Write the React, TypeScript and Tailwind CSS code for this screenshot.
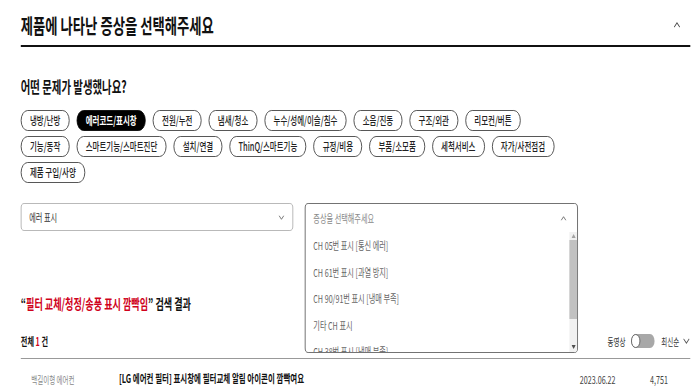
import React from "react";

const row1 = ["냉방/난방", "에러코드/표시창", "전원/누전", "냄새/청소", "누수/성에/이슬/침수", "소음/진동", "구조/외관", "리모컨/버튼"];
const row2 = ["기능/동작", "스마트기능/스마트진단", "설치/연결", "ThinQ/스마트기능", "규정/비용", "부품/소모품", "세척서비스", "자가/사전점검"];
const row3 = ["제품 구입/사양"];
const options = [
  "CH 05번 표시 [통신 에러]",
  "CH 61번 표시 [과열 방지]",
  "CH 90/91번 표시 [냉매 부족]",
  "기타 CH 표시",
  "CH 38번 표시 [냉매 부족]",
];

function Chevron({ up, className }: { up?: boolean; className?: string }) {
  return (
    <svg viewBox="0 0 12 7" className={className} fill="none" stroke="currentColor" strokeWidth="1.3">
      <path d={up ? "M1 6L6 1L11 6" : "M1 1L6 6L11 1"} />
    </svg>
  );
}

function Pill({ label, active }: { label: string; active?: boolean }) {
  return (
    <div
      className={
        active
          ? "h-[21px] px-[13px] rounded-full border-y border-x-[1.5px] border-black bg-black text-white text-[11.5px] font-bold flex items-center whitespace-nowrap"
          : "h-[21px] px-[13px] rounded-full border-y border-x-[1.5px] border-[#333] bg-white text-[#222] text-[11.5px] font-medium flex items-center whitespace-nowrap"
      }
    >
      {label}
    </div>
  );
}

function PillRow({ items }: { items: string[] }) {
  return (
    <div className="flex gap-[11px]">
      {items.map((l) => (
        <Pill key={l} label={l} active={l === "에러코드/표시창"} />
      ))}
    </div>
  );
}

export default function App() {
  return (
    <div className="w-[700px] h-[392px] overflow-hidden bg-white">
      <div className="w-[1077px] origin-top-left scale-x-[0.65] pl-[32px] pr-[15px] font-['Noto_Sans_CJK_KR','Noto_Sans',sans-serif] text-[#111]">
        {/* header */}
        <div className="flex items-center justify-between h-[47px] pt-[5px] border-b-2 border-[#111]">
          <h2 className="text-[20.5px] font-bold leading-[28px] text-[#111]">제품에 나타난 증상을 선택해주세요</h2>
          <Chevron up className="w-[11px] h-[6px] mr-[15px] text-[#444]" />
        </div>

        <h3 className="mt-[28px] text-[16px] font-bold leading-[22px]">어떤 문제가 발생했나요?</h3>

        <div className="mt-[13px] flex flex-col gap-[5px]">
          <PillRow items={row1} />
          <PillRow items={row2} />
          <PillRow items={row3} />
        </div>

        {/* selects */}
        <div className="mt-[20px] flex gap-[18px]">
          <div className="w-[419px] h-[28px] border-y border-x-[1.5px] border-[#aaa] rounded-[5px] flex items-center justify-between pl-[12px] pr-[12px] text-[11px] text-[#333]">
            <span>에러 표시</span>
            <Chevron className="w-[10px] h-[5px] text-[#555]" />
          </div>
          <div className="relative w-[420px] h-[28px]">
            <div className="absolute left-0 right-0 top-0 h-[150px] z-10 border-y border-x-[1.5px] border-[#555] rounded-[5px] bg-white flex flex-col overflow-hidden">
              <div className="h-[28px] shrink-0 flex items-center justify-between pl-[12px] pr-[16px] text-[11px] text-[#888]">
                <span>증상을 선택해주세요</span>
                <Chevron up className="w-[10px] h-[5px] text-[#555]" />
              </div>
              <div className="flex flex-1 min-h-0">
                <div className="flex-1 flex flex-col overflow-hidden">
                  {options.map((o) => (
                    <div key={o} className="h-[26.5px] shrink-0 flex items-center pl-[12px] text-[11px] text-[#666]">
                      {o}
                    </div>
                  ))}
                </div>
                <div className="w-[12px] bg-[#f1f1f1] flex flex-col items-center">
                  <svg viewBox="0 0 8 5" className="w-[7px] h-[4px] mt-[2px] text-[#a3a3a3]" fill="currentColor">
                    <path d="M4 0L8 5H0Z" />
                  </svg>
                  <div className="mt-[2px] w-full h-[79px] bg-[#c1c1c1]" />
                  <div className="flex-1" />
                  <svg viewBox="0 0 8 5" className="w-[7px] h-[4px] mb-[3px] text-[#505050]" fill="currentColor">
                    <path d="M0 0H8L4 5Z" />
                  </svg>
                </div>
              </div>
            </div>
          </div>
        </div>

        <h3 className="mt-[62px] text-[14px] font-bold leading-[20px]">
          “<span className="text-[#d0021b]">필터 교체/청정/송풍 표시 깜빡임</span>” 검색 결과
        </h3>

        {/* toolbar */}
        <div className="mt-[18px] h-[28px] pb-[7px] border-b-[1.5px] border-[#999] flex items-center justify-between">
          <div className="text-[11px] font-bold">
            전체 <span className="text-[#d0021b]">1</span> 건
          </div>
          <div className="flex items-center text-[10px] text-[#333]">
            <span>동영상</span>
            <div className="ml-[9px] w-[36px] h-[14px] rounded-full bg-[#a8a8a8] flex items-center">
              <div className="w-[14px] h-[14px] rounded-full bg-white border border-[#555]" />
            </div>
            <span className="ml-[10px]">최신순</span>
            <Chevron className="ml-[5px] w-[12px] h-[6px] text-[#555]" />
          </div>
        </div>

        {/* result row */}
        <div className="h-[40px] flex items-center">
          <div className="w-[151px] pl-[16px] text-[10px] text-[#888]">백길이형 에어컨</div>
          <div className="flex-1 text-[11.5px] font-bold text-[#111]">[LG 에어컨 필터] 표시창에 필터교체 알림 아이콘이 깜빡여요</div>
          <div className="w-[108px] text-[11px] text-[#444]">2023.06.22</div>
          <div className="w-[62px] text-[11px] text-[#444]">4,751</div>
        </div>
      </div>
    </div>
  );
}
